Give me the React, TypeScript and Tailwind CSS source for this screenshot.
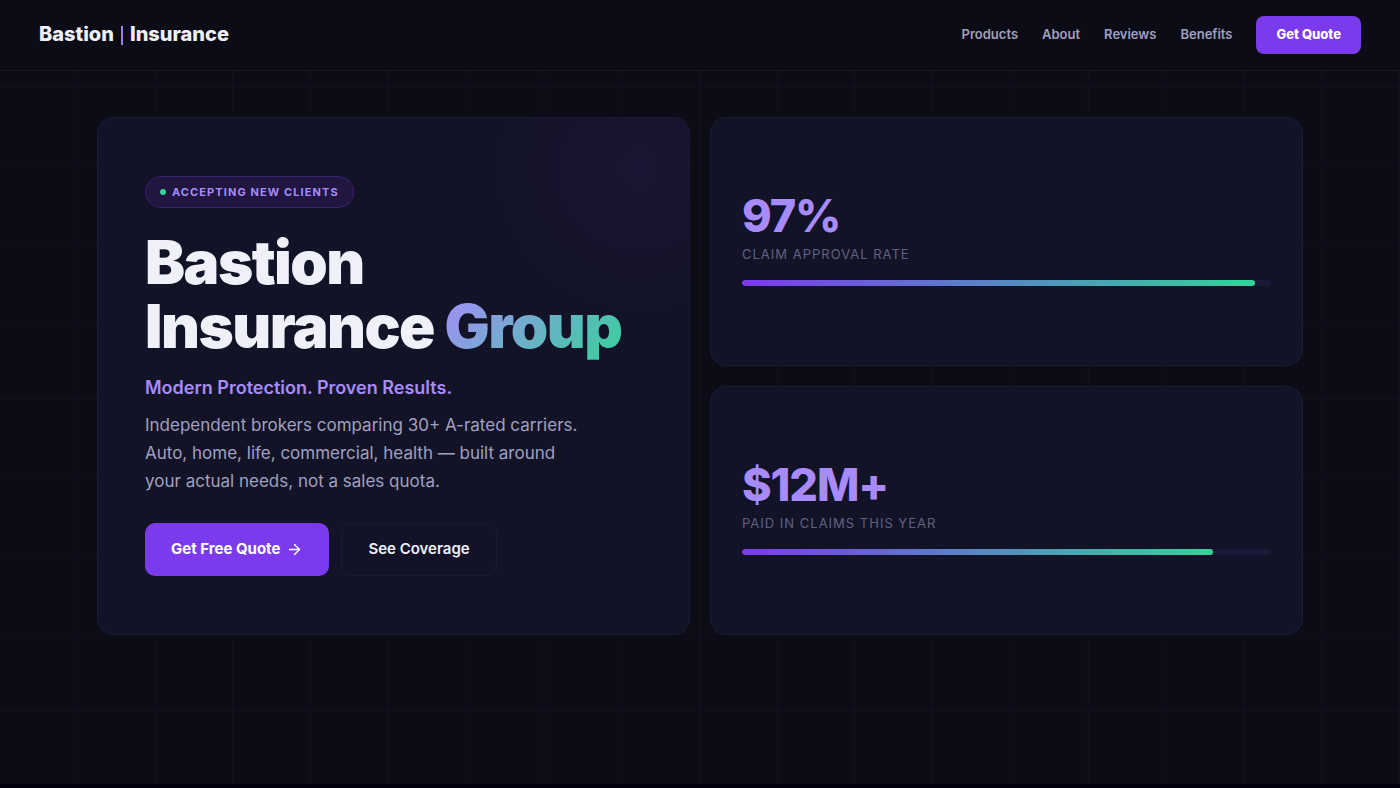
import { ArrowRight } from "lucide-react";

const links = [
  { label: "Products", href: "#products" },
  { label: "About", href: "#about" },
  { label: "Reviews", href: "#reviews" },
  { label: "Benefits", href: "#benefits" },
];

const stats = [
  { value: "97%", label: "Claim Approval Rate", percent: 97 },
  { value: "$12M+", label: "Paid in Claims This Year", percent: 89 },
];

const Navbar = () => {
  return (
    <header className="flex items-center justify-between px-[39px] py-4 bg-[#0c0c16] border-b border-[#171725]">
      <a href="#top" className="flex items-center gap-[7px] pb-[2px] text-[20px] leading-6 font-extrabold text-[#f0f0f8]">
        <span>Bastion</span>
        <span className="w-[2px] h-[19px] mt-[3px] bg-[#a07cf5]" />
        <span>Insurance</span>
      </a>
      <nav className="flex items-center gap-6">
        {links.map((link) => (
          <a key={link.label} href={link.href} className="text-[13px] font-semibold text-[#a0a0c0]">
            {link.label}
          </a>
        ))}
        <button className="h-[38px] px-5 rounded-lg bg-[#7c3aed] text-[13px] font-extrabold text-white">
          Get Quote
        </button>
      </nav>
    </header>
  );
};

const StatCard = ({ value, label, percent }: { value: string; label: string; percent: number }) => {
  return (
    <div className="flex flex-col justify-center px-[31px] rounded-2xl bg-[#131327] border border-[#1d1b36]">
      <div className="text-[45px] leading-[38px] font-extrabold tracking-tight text-[#a78bfa]">{value}</div>
      <div className="mt-[9px] text-[13px] leading-5 tracking-[1px] uppercase text-[#606080]">{label}</div>
      <div className="mt-4 h-[6px] rounded-full bg-[#1a1a38] overflow-hidden">
        <div
          className="h-full rounded-full bg-linear-to-r/srgb from-[#7c3aed] to-[#34d399]"
          style={{ width: `${percent}%` }}
        />
      </div>
    </div>
  );
};

const Hero = () => {
  return (
    <main className="flex-1 px-6 pt-[46px] pb-12 bg-[linear-gradient(to_right,transparent_calc(100%-1px),#11101f_0),linear-gradient(to_bottom,transparent_calc(100%-1px),#11101f_0)] bg-size-[calc(100%/18)_78px] bg-position-[0_17px]">
      <div className="grid grid-cols-2 gap-5 max-w-[1206px] mx-auto">
        <section className="relative overflow-hidden flex flex-col justify-center items-start min-h-[518px] px-[47px] py-10 rounded-2xl bg-[#131327] border border-[#1d1b36]">
          <div className="absolute -top-24 -right-24 size-[292px] rounded-full bg-[radial-gradient(circle,rgba(124,58,237,0.06),transparent_70%)]" />
          <div className="flex items-center gap-[6px] h-8 px-[14px] rounded-full bg-[#201640] border border-[#3b2175]">
            <span className="size-[6px] rounded-full bg-[#34d399]" />
            <span className="text-[11px] font-bold tracking-widest uppercase text-[#a78bfa]">
              Accepting New Clients
            </span>
          </div>
          <h1 className="mt-[22px] text-[60px] leading-[64px] font-black tracking-tight text-[#f0f0f8]">
            Bastion
            <br />
            Insurance{" "}
            <span className="bg-linear-135/srgb from-[#a78bfa] to-[#34d399] bg-clip-text text-transparent">
              Group
            </span>
          </h1>
          <p className="mt-4 text-[18px] leading-7 font-semibold text-[#a78bfa]">
            Modern Protection. Proven Results.
          </p>
          <p className="mt-[9px] max-w-[437px] text-[17px] leading-7 text-[#a0a0c0]">
            Independent brokers comparing 30+ A-rated carriers. Auto, home, life, commercial, health — built around
            your actual needs, not a sales quota.
          </p>
          <div className="flex gap-3 mt-7">
            <button className="flex items-center gap-[6px] h-[53px] px-[26px] rounded-[10px] bg-[#7c3aed] text-[15px] font-bold text-white">
              Get Free Quote
              <ArrowRight size={17} strokeWidth={2} />
            </button>
            <button className="h-[53px] px-[26px] rounded-[10px] border border-[#1b1b30] text-[15px] font-semibold text-[#f0f0f8]">
              See Coverage
            </button>
          </div>
        </section>
        <div className="grid grid-rows-2 gap-5">
          {stats.map((stat) => (
            <StatCard key={stat.label} {...stat} />
          ))}
        </div>
      </div>
    </main>
  );
};

export default function App() {
  return (
    <div
      id="top"
      className="min-h-screen flex flex-col bg-[#0c0c16] border-b-4 border-[#05000d] font-[Inter,'Liberation_Sans',sans-serif]"
    >
      <Navbar />
      <Hero />
    </div>
  );
}
